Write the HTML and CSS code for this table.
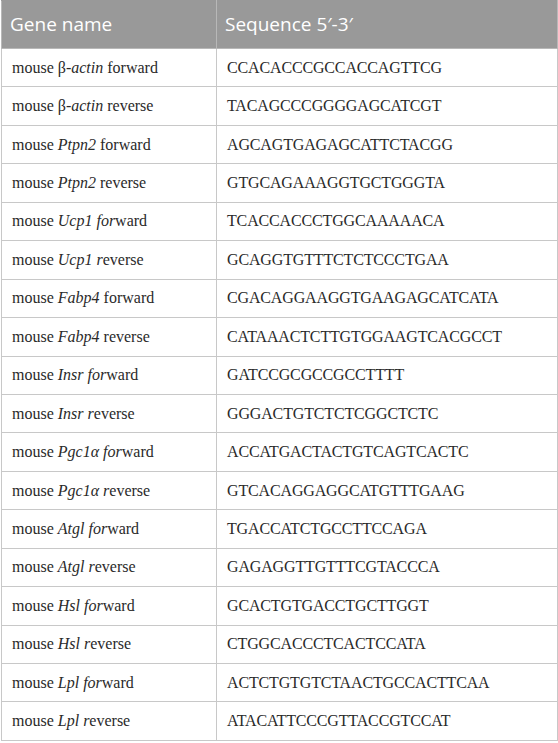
FILE: index.html
```html
<!DOCTYPE html>
<html>
<head>
<meta charset="utf-8">
<link rel="stylesheet" href="styles.css">
</head>
<body>
<table class="primers">
  <thead>
    <tr><th class="c1">Gene name</th><th class="c2">Sequence 5′-3′</th></tr>
  </thead>
  <tbody>
    <tr><td>mouse β-<i>actin</i> forward</td><td>CCACACCCGCCACCAGTTCG</td></tr>
    <tr><td>mouse β-<i>actin</i> reverse</td><td>TACAGCCCGGGGAGCATCGT</td></tr>
    <tr><td>mouse <i>Ptpn2</i> forward</td><td>AGCAGTGAGAGCATTCTACGG</td></tr>
    <tr><td>mouse <i>Ptpn2</i> reverse</td><td>GTGCAGAAAGGTGCTGGGTA</td></tr>
    <tr><td>mouse <i>Ucp1 for</i>ward</td><td>TCACCACCCTGGCAAAAACA</td></tr>
    <tr><td>mouse <i>Ucp1</i> <i>r</i>everse</td><td>GCAGGTGTTTCTCTCCCTGAA</td></tr>
    <tr><td>mouse <i>Fabp4</i> forward</td><td>CGACAGGAAGGTGAAGAGCATCATA</td></tr>
    <tr><td>mouse <i>Fabp4</i> reverse</td><td>CATAAACTCTTGTGGAAGTCACGCCT</td></tr>
    <tr><td>mouse <i>Insr for</i>ward</td><td>GATCCGCGCCGCCTTTT</td></tr>
    <tr><td>mouse <i>Insr</i> <i>r</i>everse</td><td>GGGACTGTCTCTCGGCTCTC</td></tr>
    <tr><td>mouse <i>Pgc1α for</i>ward</td><td>ACCATGACTACTGTCAGTCACTC</td></tr>
    <tr><td>mouse <i>Pgc1α</i> <i>r</i>everse</td><td>GTCACAGGAGGCATGTTTGAAG</td></tr>
    <tr><td>mouse <i>Atgl for</i>ward</td><td>TGACCATCTGCCTTCCAGA</td></tr>
    <tr><td>mouse <i>Atgl</i> <i>r</i>everse</td><td>GAGAGGTTGTTTCGTACCCA</td></tr>
    <tr><td>mouse <i>Hsl for</i>ward</td><td>GCACTGTGACCTGCTTGGT</td></tr>
    <tr><td>mouse <i>Hsl</i> <i>r</i>everse</td><td>CTGGCACCCTCACTCCATA</td></tr>
    <tr><td>mouse <i>Lpl for</i>ward</td><td>ACTCTGTGTCTAACTGCCACTTCAA</td></tr>
    <tr><td>mouse <i>Lpl</i> <i>r</i>everse</td><td>ATACATTCCCGTTACCGTCCAT</td></tr>
  </tbody>
</table>
</body>
</html>
```

FILE: styles.css
```css
html, body {
  margin: 0;
  padding: 0;
  background: #ffffff;
}
.primers {
  width: 557px;
  margin: 0 0 0 1px;
  border-collapse: collapse;
  table-layout: fixed;
  font-family: "Liberation Serif", "Times New Roman", serif;
  font-size: 16px;
  color: #2a2a2a;
}
.primers th {
  height: 48px;
  box-sizing: border-box;
  background: #999999;
  color: #ffffff;
  font-family: "Open Sans", "Noto Sans", sans-serif;
  font-weight: normal;
  font-size: 19px;
  text-align: left;
  padding: 0 0 1px 8px;
  border: 1px solid #b8b8b8;
  border-top-color: #999999;
}
.primers th.c1 {
  width: 215px;
}
.primers td {
  height: 38.45px;
  box-sizing: border-box;
  padding: 0 0 0 10px;
  border: 1px solid #c8c8c8;
  vertical-align: middle;
  white-space: nowrap;
}
.primers td + td {
  letter-spacing: -0.15px;
}
```
